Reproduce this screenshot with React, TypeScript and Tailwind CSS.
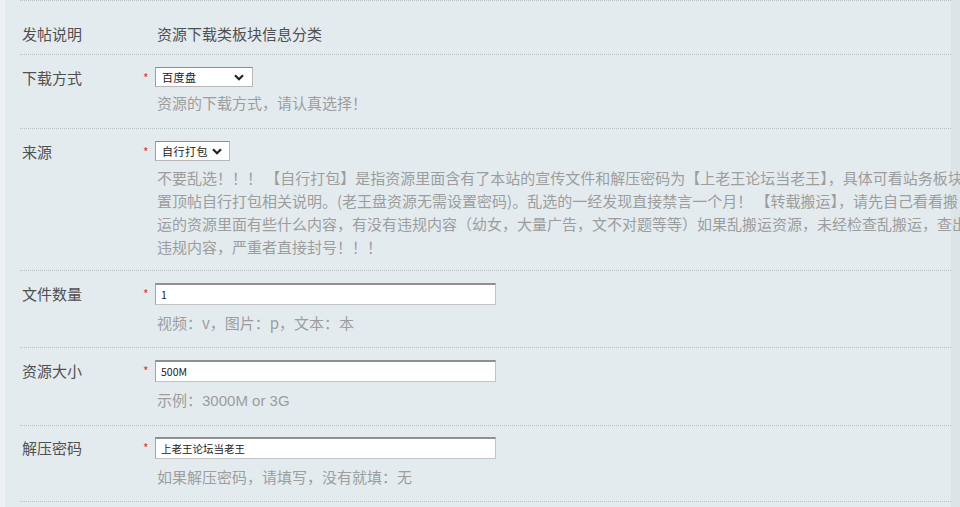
import type { ReactNode } from "react";

const FONT = "font-['Noto_Sans_CJK_SC','Noto_Sans',sans-serif]";

const SOURCE_NOTE = [
  "不要乱选！！！ 【自行打包】是指资源里面含有了本站的宣传文件和解压密码为【上老王论坛当老王】，具体可看站务板块",
  "置顶帖自行打包相关说明。(老王盘资源无需设置密码)。乱选的一经发现直接禁言一个月！ 【转载搬运】，请先自己看看搬",
  "运的资源里面有些什么内容，有没有违规内容（幼女，大量广告，文不对题等等）如果乱搬运资源，未经检查乱搬运，查出",
  "违规内容，严重者直接封号！！！",
];

function Chevron() {
  return (
    <svg width="10" height="7" viewBox="0 0 10 7" className="shrink-0">
      <path d="M1 1.2 L5 5.2 L9 1.2" fill="none" stroke="#222" strokeWidth="2.2" />
    </svg>
  );
}

function Row({
  label,
  required,
  children,
  className = "",
}: {
  label: string;
  required?: boolean;
  children: ReactNode;
  className?: string;
}) {
  return (
    <div className={`flex border-b border-dotted border-[#b9c0c4] pl-[2px] ${className}`}>
      <div className="w-[120px] shrink-0 text-[15px] leading-[22px] text-[#505050]">{label}</div>
      <div className="w-[13px] shrink-0 pt-[4px] pl-[1px] text-[12px] leading-[14px] text-[#e0383a]">
        {required ? "*" : ""}
      </div>
      <div className="min-w-0 flex-1">{children}</div>
    </div>
  );
}

function FakeSelect({ value, width }: { value: string; width: string }) {
  return (
    <div
      className={`flex h-[20px] ${width} items-center gap-1 whitespace-nowrap border border-[#b8b8b8] border-t-[#8d8d8d] border-l-[#9e9e9e] bg-white pl-[6px] pr-[8px] text-[11px] text-[#222]`}
    >
      <span className="flex-1 tracking-[0.5px]">{value}</span>
      <Chevron />
    </div>
  );
}

function TextBox({ value }: { value: string }) {
  return (
    <input
      readOnly
      value={value}
      className={`${FONT} block h-[22px] w-[341px] border border-[#c4c4c4] border-t-2 border-t-[#8f8f8f] border-l-[#a3a3a3] bg-white px-[5px] text-[10.5px] text-[#222] outline-none`}
    />
  );
}

function Help({ children }: { children: ReactNode }) {
  return <div className="mt-[6px] pl-[2px] text-[15px] leading-[24px] text-[#9d9d9d]">{children}</div>;
}

export default function App() {
  return (
    <div className={`${FONT} h-[507px] w-[960px] overflow-hidden bg-[#e4ebef]`}>
      <div className="h-full border-l-[5px] border-r-[9px] border-l-[#edf1f3] border-r-[#dde4e8] pl-[15px]">
        <Row label="发帖说明" className="border-t pt-[22px] pb-[9px]">
          <div className="pl-[2px] text-[15px] leading-[22px] text-[#505050]">资源下载类板块信息分类</div>
        </Row>

        <Row label="下载方式" required className="pt-[12px] pb-[13px]">
          <FakeSelect value="百度盘" width="w-[98px]" />
          <div className="mt-[4px] pl-[2px] text-[15px] leading-[24px] text-[#9d9d9d]">
            资源的下载方式，请认真选择！
          </div>
        </Row>

        <Row label="来源" required className="pt-[12px] pb-[12px]">
          <FakeSelect value="自行打包" width="w-[75px]" />
          <div className="mt-[5px] pl-[2px] text-[15px] leading-[23px] whitespace-nowrap text-[#9d9d9d]">
            {SOURCE_NOTE.map((line) => (
              <div key={line}>{line}</div>
            ))}
          </div>
        </Row>

        <Row label="文件数量" required className="pt-[12px] pb-[12px]">
          <TextBox value="1" />
          <Help>视频：v，图片：p，文本：本</Help>
        </Row>

        <Row label="资源大小" required className="pt-[12px] pb-[12px]">
          <TextBox value="500M" />
          <Help>
            示例：<span className="font-['Liberation_Sans',sans-serif]">3000M or 3G</span>
          </Help>
        </Row>

        <Row label="解压密码" required className="pt-[11px] pb-[12px]">
          <TextBox value="上老王论坛当老王" />
          <Help>如果解压密码，请填写，没有就填：无</Help>
        </Row>
      </div>
    </div>
  );
}
